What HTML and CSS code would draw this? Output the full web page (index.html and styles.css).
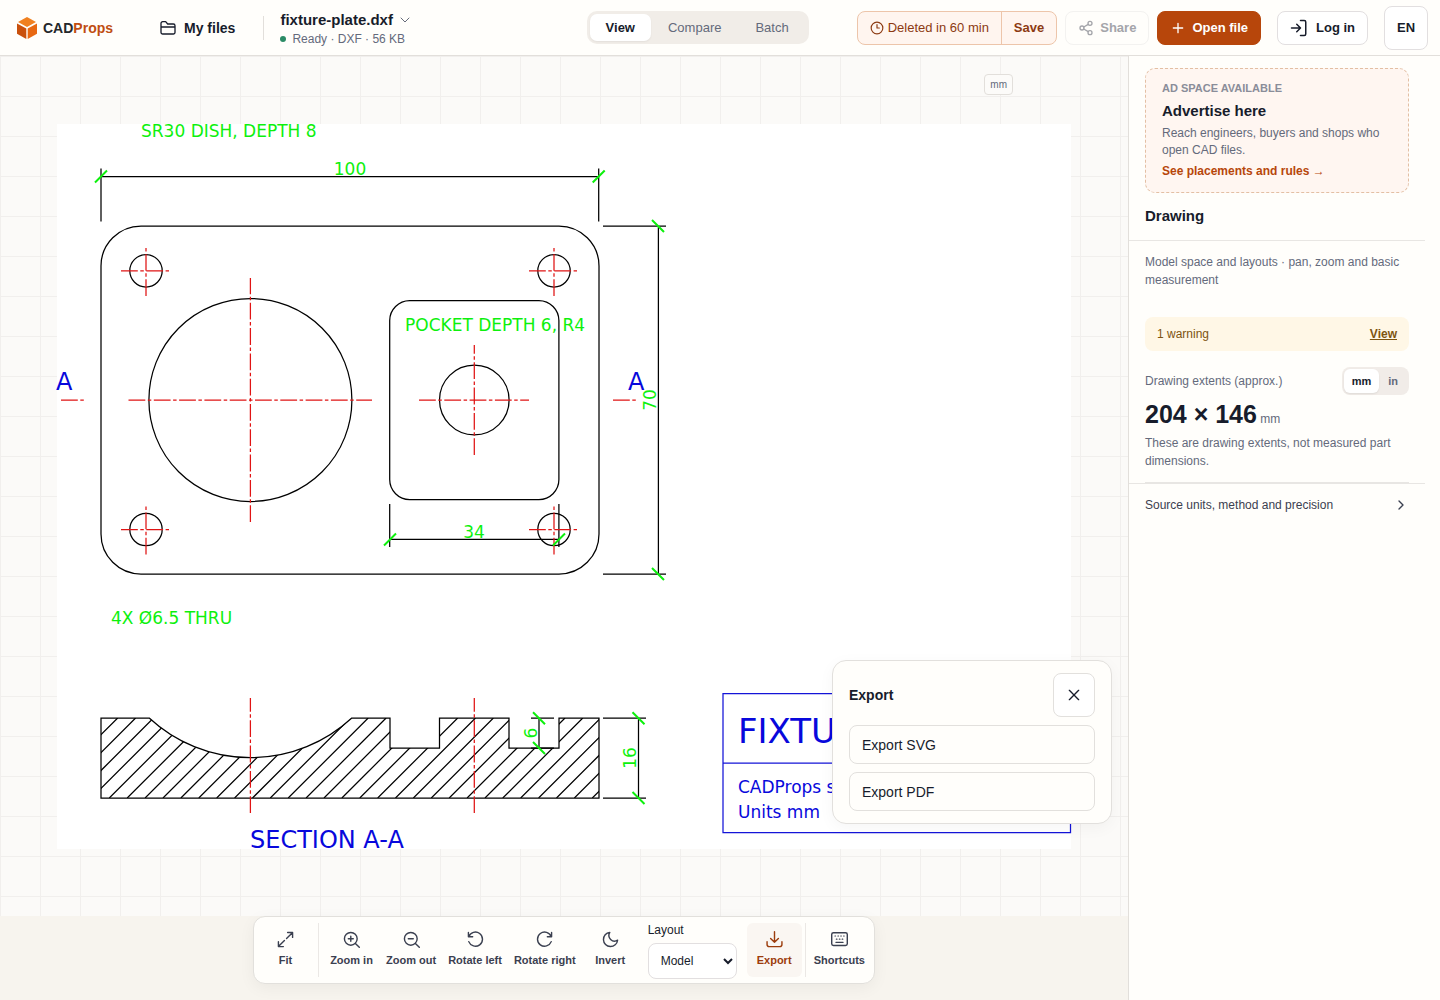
FILE: index.html
```html
<!DOCTYPE html>
<html lang="en">
<head>
<meta charset="utf-8">
<meta name="viewport" content="width=device-width, initial-scale=1">
<title>fixture-plate.dxf – CADProps</title>
<link rel="stylesheet" href="styles.css">
</head>
<body>
<header class="topbar">
  <a class="brand" href="#">
    <svg class="brand-mark" viewBox="0 0 20 22" aria-hidden="true">
      <path fill="#f08020" d="M10 0l9 5-9 5-9-5z"/>
      <path fill="#c9500c" d="M0 6.400l9.300 5.200V22L0 16.800z"/>
      <path fill="#e86812" d="M20 6.400l-9.300 5.200V22l9.300-5.200z"/>
    </svg>
    <span>CAD<span class="brand-accent">Props</span></span>
  </a>
  <button class="files" type="button">
    <svg class="icon" viewBox="0 0 24 24" aria-hidden="true"><path d="M1.500 18.500V5a2.500 2.500 0 0 1 2.500-2.500h4.500l3 3.500h8.500a2.500 2.500 0 0 1 2.500 2.500v10a2.500 2.500 0 0 1-2.500 2.500h-16a2.500 2.500 0 0 1-2.500-2.500zM1.500 10.500h21"/></svg>
    My files
  </button>
  <div class="document">
    <button class="document-name" type="button">fixture-plate.dxf
      <svg class="caret" viewBox="0 0 12 12" aria-hidden="true"><path d="M2 4l4 4 4-4"/></svg>
    </button>
    <div class="document-status"><span class="dot"></span>Ready · DXF · 56 KB</div>
  </div>
  <nav class="tabs">
    <button class="tab tab-active" type="button">View</button>
    <button class="tab" type="button">Compare</button>
    <button class="tab" type="button">Batch</button>
  </nav>
  <div class="actions">
    <div class="expiry">
      <span class="expiry-text">
        <svg class="icon-small" viewBox="0 0 24 24" aria-hidden="true"><circle cx="12" cy="12" r="10"/><path d="M12 6v6h4"/></svg>
        Deleted in 60 min
      </span>
      <button class="expiry-save" type="button">Save</button>
    </div>
    <button class="button share" type="button" disabled>
      <svg class="icon" viewBox="0 0 24 24" aria-hidden="true"><circle cx="18" cy="5" r="3"/><circle cx="6" cy="12" r="3"/><circle cx="18" cy="19" r="3"/><path d="M8.600 13.500l6.800 4M15.400 6.500l-6.800 4"/></svg>
      Share
    </button>
    <button class="button primary" type="button">
      <svg class="icon" viewBox="0 0 24 24" aria-hidden="true"><path d="M12 5v14M5 12h14"/></svg>
      Open file
    </button>
    <button class="button login" type="button">
      <svg class="icon-large" viewBox="0 0 24 24" aria-hidden="true"><path d="M14 2h5a2 2 0 0 1 2 2v16a2 2 0 0 1-2 2h-5M9 17l5-5-5-5M14 12H2"/></svg>
      Log in
    </button>
    <button class="button language" type="button">EN</button>
  </div>
</header>

<div class="workspace">
  <main class="viewer">
    <div class="canvas">
      <svg class="drawing" viewBox="0 56 1128 860" role="img" aria-label="Fixture plate drawing">
        <defs>
          <clipPath id="cut"><path d="M101 718H149.200A149.100 149.100 0 0 0 351.800 718H390V748H439.500V718H509V748H559V718H599V798H101z"/></clipPath>
        </defs>
        <rect x="57" y="124" width="1014" height="725" fill="#fff"/>
        <g class="ink">
          <rect x="101" y="226" width="498" height="348" rx="40"/>
          <circle cx="250.400" cy="400" r="101.500"/>
          <circle cx="474.300" cy="400" r="34.800"/>
          <rect x="389.700" y="300.600" width="169.200" height="199" rx="20"/>
          <circle cx="146" cy="270.800" r="16.200"/><circle cx="554" cy="270.800" r="16.200"/>
          <circle cx="146" cy="529.500" r="16.200"/><circle cx="554" cy="529.500" r="16.200"/>
          <path d="M101 168.500V221.500M598.700 168.500V221.500M101 176.500H599"/>
          <path d="M603 226H666M603 574H666M658.400 226V574"/>
          <path d="M389.700 504V547M558.900 504V547M389.700 539.400H559"/>
          <path d="M101 718H149.200A149.100 149.100 0 0 0 351.800 718H390V748H439.500V718H509V748H559V718H599V798H101z"/>
          <path d="M603 718.200H646M603 798H646M638.500 718V798M531 718.200H554M531 748H554M539 718V748"/>
          <path clip-path="url(#cut)" d="M37.700 798l80-80M55.600 798l80-80M73.500 798l80-80M91.400 798l80-80M109.300 798l80-80M127.200 798l80-80M145.100 798l80-80M163 798l80-80M180.900 798l80-80M198.800 798l80-80M216.700 798l80-80M234.600 798l80-80M252.500 798l80-80M270.300 798l80-80M288.200 798l80-80M306.100 798l80-80M324 798l80-80M341.900 798l80-80M359.800 798l80-80M377.700 798l80-80M395.500 798l80-80M413.400 798l80-80M431.300 798l80-80M449.200 798l80-80M467.100 798l80-80M485 798l80-80M502.800 798l80-80M520.700 798l80-80M538.600 798l80-80M556.500 798l80-80M574.400 798l80-80M592.300 798l80-80"/>
        </g>
        <g class="center">
          <path d="M128.500 400H372M250.400 522V278M419 400H529M474.300 455V345"/>
          <path d="M121 270.800H169M146 296V248M529 270.800H577M554 296V248"/>
          <path d="M121 529.500H169M146 554.500V506.500M529 529.500H577M554 554.500V506.500"/>
          <path d="M61 400H84M613 400H636M250.400 813V698M474.300 813V698"/>
        </g>
        <g class="tick">
          <path d="M95 182.500l12-12M592.700 182.500l12-12M384 545.500l12-12M553 545.500l12-12"/>
          <path d="M652 220l12 12M652 568l12 12M632.500 712.200l12 12M632.500 792l12 12M533 712.200l12 12M533 742l12 12"/>
        </g>
        <g class="note">
          <text x="141" y="137">SR30 DISH, DEPTH 8</text>
          <text x="350" y="175" text-anchor="middle">100</text>
          <text x="405" y="331">POCKET DEPTH 6, R4</text>
          <text x="474" y="538" text-anchor="middle">34</text>
          <text x="111" y="624">4X Ø6.5 THRU</text>
          <text transform="translate(656 400) rotate(-90)" text-anchor="middle">70</text>
          <text transform="translate(537 733) rotate(-90)" text-anchor="middle">6</text>
          <text transform="translate(636 758) rotate(-90)" text-anchor="middle">16</text>
        </g>
        <g class="title">
          <path d="M723 693.500H1070.500V832.500H723zM723 763H1070.500"/>
          <text class="text-24" x="56" y="390">A</text>
          <text class="text-24" x="628" y="390">A</text>
          <text class="text-24" x="250" y="848">SECTION A-A</text>
          <text class="text-34" x="738" y="743">FIXTU</text>
          <text class="text-17" x="738" y="793">CADProps s</text>
          <text class="text-17" x="738" y="818">Units mm</text>
        </g>
      </svg>
      <span class="unit-tag">mm</span>
      <section class="export" aria-label="Export">
        <div class="export-head">
          <h2 class="export-title">Export</h2>
          <button class="export-close" type="button" aria-label="Close">
            <svg class="icon" viewBox="0 0 24 24" aria-hidden="true"><path d="M5 5l14 14M19 5L5 19"/></svg>
          </button>
        </div>
        <button class="export-option" type="button">Export SVG</button>
        <button class="export-option" type="button">Export PDF</button>
      </section>
    </div>
    <div class="dock">
      <div class="toolbar">
        <button class="tool" type="button"><svg class="tool-icon" viewBox="0 0 24 24" aria-hidden="true"><path d="M15 2h7v7M9 22H2v-7M22 2l-8.500 8.500M2 22l8.500-8.500"/></svg>Fit</button>
        <span class="rule"></span>
        <button class="tool" type="button"><svg class="tool-icon" viewBox="0 0 24 24" aria-hidden="true"><circle cx="11" cy="11" r="9"/><path d="M23 23l-5.500-5.500M11 7.500v7M7.500 11h7"/></svg>Zoom in</button>
        <button class="tool" type="button"><svg class="tool-icon" viewBox="0 0 24 24" aria-hidden="true"><circle cx="11" cy="11" r="9"/><path d="M23 23l-5.500-5.500M7.500 11h7"/></svg>Zoom out</button>
        <button class="tool" type="button"><svg class="tool-icon" viewBox="0 0 24 24" aria-hidden="true"><path d="M2 2v6h6M2.500 8A10 10 0 1 1 2.500 15"/></svg>Rotate left</button>
        <button class="tool" type="button"><svg class="tool-icon" viewBox="0 0 24 24" aria-hidden="true"><path d="M22 2v6h-6M21.500 8A10 10 0 1 0 21.500 15"/></svg>Rotate right</button>
        <button class="tool" type="button"><svg class="tool-icon" viewBox="0 0 24 24" aria-hidden="true"><path d="M22 13A10 10 0 1 1 11 2a8 8 0 0 0 11 11z"/></svg>Invert</button>
        <div class="layout-field">
          <label for="layout">Layout</label>
          <select class="layout-select" id="layout"><option>Model</option></select>
        </div>
        <button class="tool tool-active" type="button"><svg class="tool-icon" viewBox="0 0 24 24" aria-hidden="true"><path d="M1.500 15v4a3 3 0 0 0 3 3h15a3 3 0 0 0 3-3v-4M6.500 10.500L12 16l5.500-5.500M12 1v15"/></svg>Export</button>
        <span class="rule rule-last"></span>
        <button class="tool" type="button"><svg class="tool-icon" viewBox="0 0 24 24" aria-hidden="true"><rect x="1" y="2.500" width="22" height="18" rx="2.500"/><path stroke-width="1.500" d="M5.500 7h1M9.700 7h1M13.700 7h1M17.700 7h1M7.500 11.500h1M11.700 11.500h1M15.700 11.500h1"/><path d="M7 16h10"/></svg>Shortcuts</button>
      </div>
    </div>
  </main>

  <aside class="sidebar">
    <section class="ad">
      <p class="ad-kicker">AD SPACE AVAILABLE</p>
      <h2 class="ad-title">Advertise here</h2>
      <p class="ad-text">Reach engineers, buyers and shops who open CAD files.</p>
      <a class="ad-link" href="#">See placements and rules →</a>
    </section>
    <h2 class="panel-title">Drawing</h2>
    <div class="panel">
      <p class="summary">Model space and layouts · pan, zoom and basic measurement</p>
      <div class="warning"><span>1 warning</span><a class="warning-link" href="#">View</a></div>
      <div class="extents-head">
        <span>Drawing extents (approx.)</span>
        <div class="units">
          <button class="unit unit-active" type="button">mm</button>
          <button class="unit" type="button">in</button>
        </div>
      </div>
      <p class="extents"><strong class="extents-value">204 × 146</strong> mm</p>
      <p class="extents-note">These are drawing extents, not measured part dimensions.</p>
    </div>
    <button class="details" type="button">Source units, method and precision
      <svg class="icon" viewBox="0 0 24 24" aria-hidden="true"><path d="M9 6l6 6-6 6"/></svg>
    </button>
  </aside>
</div>
</body>
</html>
```
FILE: styles.css
```css
* { box-sizing: border-box; }
body {
  margin: 0;
  height: 100vh;
  display: flex;
  flex-direction: column;
  background: #fffefb;
  color: #171c2b;
  font-family: "Liberation Sans", Arial, sans-serif;
  font-size: 13px;
}
h2, p { margin: 0; }
button, select { font: inherit; color: inherit; }
button { padding: 0; border: 0; background: none; white-space: nowrap; }
a { color: inherit; text-decoration: none; }
svg { flex: none; fill: none; stroke: currentColor; stroke-width: 2; stroke-linecap: round; stroke-linejoin: round; }
.icon { width: 16px; height: 16px; }
.icon-small { width: 14px; height: 14px; }
.icon-large { width: 18px; height: 18px; }

/* Top bar */
.topbar {
  display: flex;
  align-items: center;
  height: 56px;
  flex: none;
  padding: 0 12px 0 17px;
  border-bottom: 1px solid #e2dfdb;
}
.brand { display: flex; align-items: center; gap: 6px; font-size: 14px; font-weight: bold; color: #25272b; }
.brand-mark { width: 20px; height: 22px; stroke: none; }
.brand-accent { color: #c04d12; }
.files { display: flex; align-items: center; gap: 8px; margin-left: 47px; font-size: 14px; font-weight: bold; }
.document { margin-left: 28px; padding: 2px 0 0 17px; position: relative; }
.document::before { content: ""; position: absolute; left: 0; top: 8px; height: 24px; border-left: 1px solid #e2dfdb; }
.document-name { display: flex; align-items: center; gap: 6px; font-size: 15px; line-height: 20px; font-weight: bold; }
.caret { width: 12px; height: 12px; stroke: #666b7a; stroke-width: 1; }
.document-status { display: flex; align-items: center; gap: 6px; font-size: 12px; line-height: 18px; color: #646a7b; }
.dot { width: 6px; height: 6px; border-radius: 50%; background: #2b8b66; }
.tabs { display: flex; margin-left: auto; padding: 3px; border-radius: 10px; background: #f1ede8; color: #646a7b; }
.tab { height: 27px; padding: 0 17px; border-radius: 7px; }
.tab-active { padding: 0 16px; background: #fff; color: #171c2b; font-weight: bold; box-shadow: 0 1px 2px #0000000f; }
.actions { display: flex; align-items: center; gap: 8px; margin-left: 48px; }
.expiry { display: flex; height: 34px; border: 1px solid #edc5aa; border-radius: 8px; background: #fff5ef; color: #8c3a12; }
.expiry-text { display: flex; align-items: center; gap: 4px; padding: 0 12px; white-space: nowrap; }
.expiry-save { padding: 0 12px; border-left: 1px solid #edc5aa; font-weight: bold; }
.button {
  display: flex;
  align-items: center;
  justify-content: center;
  gap: 6px;
  height: 34px;
  padding: 0 12px;
  border: 1px solid #e2dfe0;
  border-radius: 8px;
  background: #fff;
  font-weight: bold;
}
.share { color: #a4a5aa; border-color: #f3f2f0; background: #fffefb; }
.primary { border-color: #b7460b; background: #b7460b; color: #fff; }
.login { margin-left: 8px; gap: 8px; }
.language { margin-left: 8px; width: 44px; height: 44px; }

/* Viewer */
.workspace { display: flex; flex: 1; min-height: 0; }
.viewer { display: flex; flex-direction: column; flex: 1; min-width: 0; }
.canvas {
  position: relative;
  flex: 1;
  min-height: 0;
  background-color: #fbfaf8;
  background-image: linear-gradient(#f1efed 1px, transparent 1px), linear-gradient(90deg, #f1efed 1px, transparent 1px);
  background-size: 40px 40px;
}
.drawing { display: block; width: 100%; height: 100%; stroke: none; font-family: "DejaVu Sans", sans-serif; }
.drawing g { stroke-linecap: butt; stroke-linejoin: miter; }
.ink { stroke: #000; stroke-width: 1.250; }
.center { stroke: #e01414; stroke-width: 1.250; stroke-dasharray: 16.800 2.500 3.500 2.500; }
.tick { stroke: #0df00d; stroke-width: 2; }
.note { fill: #0df00d; font-size: 17px; }
.title path { stroke: #1414d8; stroke-width: 1.250; }
.title text { fill: #0808dc; }
.text-17 { font-size: 17px; }
.text-24 { font-size: 24px; }
.text-34 { font-size: 34px; }
.unit-tag {
  position: absolute;
  top: 18px;
  right: 115px;
  padding: 0 5px;
  border: 1px solid #e2dfdb;
  border-radius: 4px;
  background: #fcfbf9;
  color: #646a7b;
  font-size: 10px;
  line-height: 19px;
}
.export {
  position: absolute;
  right: 16px;
  bottom: 92px;
  width: 280px;
  display: flex;
  flex-direction: column;
  gap: 8px;
  padding: 12px 16px;
  border: 1px solid #e2e0dd;
  border-radius: 14px;
  background: #fffefb;
  box-shadow: 0 4px 16px #0000000a;
  font-size: 14px;
}
.export-head { display: flex; align-items: center; justify-content: space-between; }
.export-title { font-size: 14px; }
.export-close {
  display: flex;
  align-items: center;
  justify-content: center;
  width: 42px;
  height: 44px;
  border: 1px solid #e2e0dd;
  border-radius: 8px;
  background: #fff;
}
.export-option { height: 39px; padding: 0 12px; border: 1px solid #e2e0dd; border-radius: 8px; text-align: left; }

/* Bottom toolbar */
.dock { display: flex; justify-content: center; flex: none; padding-bottom: 16px; background: #f7f4ee; }
.toolbar {
  display: flex;
  align-items: center;
  gap: 2px;
  height: 68px;
  padding: 0 4px;
  border: 1px solid #e2e0dc;
  border-radius: 12px;
  background: #fffefb;
  box-shadow: 0 4px 16px #0000000d;
  position: relative;
}
.tool {
  display: flex;
  flex-direction: column;
  align-items: center;
  gap: 5px;
  min-width: 55px;
  height: 54px;
  padding: 8px 5px 0;
  border-radius: 6px;
  color: #3b4050;
  font-size: 11px;
  line-height: 14px;
  font-weight: bold;
}
.tool-icon { width: 17px; height: 17px; }
.tool-active { background: #faf6f2; color: #9c3c0c; }
.rule { width: 1px; height: 54px; margin: 0 3px; background: #ebe8e5; }
.rule-last { margin: 0 1px; }
.layout-field { display: flex; flex-direction: column; gap: 6px; padding: 2px 8px 0; font-size: 12px; line-height: 14px; }
.layout-select { width: 89px; height: 36px; padding: 0 0 0 8px; border: 1px solid #e2dfe0; border-radius: 8px; background: #fff; }

/* Sidebar */
.sidebar {
  width: 312px;
  flex: none;
  padding: 12px 15px 0 0;
  border-left: 1px solid #e2dfdb;
  color: #646a7b;
  font-size: 12px;
  line-height: 18px;
  overflow: hidden;
}
.ad { margin: 0 16px; padding: 10px 16px 12px; border: 1px dashed #e3bfa4; border-radius: 10px; background: #fff6f1; }
.ad-kicker { font-size: 11px; font-weight: bold; color: #8a8d99; }
.ad-title { margin: 3px 0; font-size: 15px; line-height: 22px; color: #171c2b; }
.ad-text { line-height: 17px; }
.ad-link { display: block; margin-top: 3px; color: #b7460b; font-weight: bold; }
.panel-title { padding: 12px 16px 14px; border-bottom: 1px solid #e8e6e3; font-size: 15px; line-height: 21px; color: #171c2b; }
.panel { margin: 0 16px; padding-top: 12px; border-bottom: 1px solid #e8e6e3; }
.warning { display: flex; align-items: center; justify-content: space-between; height: 34px; margin-top: 28px; padding: 0 12px; border-radius: 8px; background: #fff7e6; color: #7d5410; }
.warning-link { font-weight: bold; text-decoration: underline; }
.extents-head { display: flex; align-items: center; justify-content: space-between; margin-top: 16px; }
.units { display: flex; padding: 2px; border-radius: 8px; background: #f1ece8; }
.unit { height: 24px; padding: 0 9px; border-radius: 6px; font-size: 11px; font-weight: bold; }
.unit-active { padding: 0 8px; background: #fff; color: #171c2b; box-shadow: 0 1px 2px #00000014; }
.extents { margin-top: 3px; line-height: 32px; }
.extents-value { font-size: 25px; color: #171c2b; }
.extents-note { margin: -1px 0 12px; }
.details {
  display: flex;
  align-items: center;
  justify-content: space-between;
  width: 100%;
  height: 42px;
  padding: 0 16px;
  border-top: 1px solid #e8e6e3;
  color: #3b4050;
}
```
